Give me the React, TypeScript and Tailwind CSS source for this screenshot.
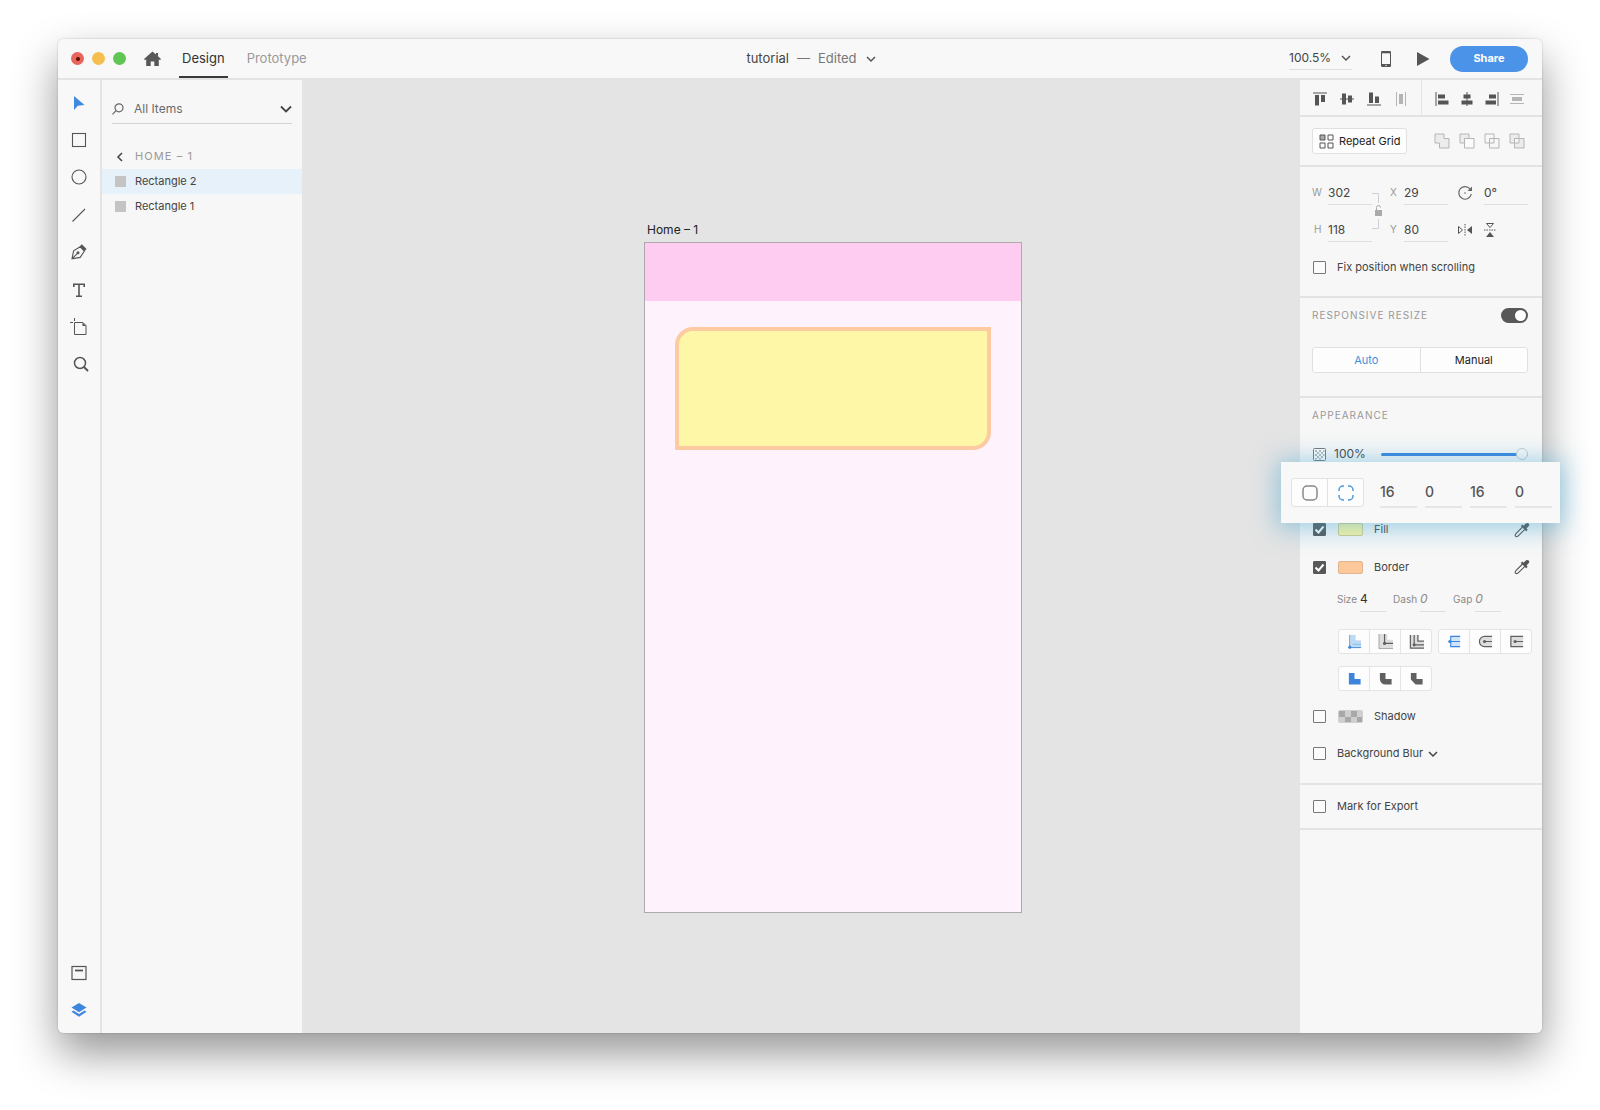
import React, { useState } from 'react';

const Chevron: React.FC<{ className?: string }> = ({ className }) => (
    <svg className={className} width="12" height="12" viewBox="0 0 12 12" fill="none" stroke="currentColor" strokeWidth="1.5">
        <path d="M2 4l4 4 4-4" />
    </svg>
);

const Eyedropper: React.FC = () => (
    <svg width="16" height="16" viewBox="0 0 16 16" fill="none" stroke="#555" strokeWidth="1.1">
        <path d="M8.500 5L2.200 11.300c-1 1-1.300 2.200-.6 2.900s1.900.4 2.900-.6L10.800 7.300" />
        <path d="M6.800 4l1.500-1.500 1.400 1.200 1.800-2c1-1 2.500-1 3.200-.3s.8 2-.3 3.100l-1.900 1.900 1.200 1.400-1.500 1.500z" fill="#555" stroke="none" />
    </svg>
);

const Check: React.FC<{ id: string; checked?: boolean }> = ({ id, checked = false }) => {
    const [on, setOn] = useState(checked);
    return (
        <span className="grid size-[13px] shrink-0">
            <input
                id={id} type="checkbox" checked={on}
                onChange={(e) => setOn(e.target.checked)}
                className="col-start-1 row-start-1 size-[13px] appearance-none rounded-[1px] border border-[#777] bg-[#fbfbfb] checked:border-[#585858] checked:bg-[#585858]"
            />
            {on && (
                <svg className="pointer-events-none col-start-1 row-start-1" width="13" height="13" viewBox="0 0 13 13" fill="none" stroke="#fff" strokeWidth="2">
                    <path d="M2.500 6.500l3 3 5-6" />
                </svg>
            )}
        </span>
    );
};

const Field: React.FC<{ id: string; value: string; label?: string; className?: string }> = ({ id, value, label, className = 'w-11 h-6' }) => (
    <input
        id={id} type="text" defaultValue={value} aria-label={label}
        className={`border-b border-[#dfdfdf] bg-transparent text-[12px] outline-none ${className}`}
    />
);

const tools = [
    { name: 'Select', icon: <path d="M4 2v14l3.800-4.300 6.700-.7z" fill="#3f8ae0" stroke="none" /> },
    { name: 'Rectangle', icon: <rect x="2.500" y="2.500" width="13" height="13" /> },
    { name: 'Ellipse', icon: <circle cx="9" cy="9" r="7" /> },
    { name: 'Line', icon: <path d="M2.500 15.500L15 3" /> },
    {
        name: 'Pen',
        icon: (
            <>
                <path d="M2 15.800l1.600-8 6.600-4 4.200 4.200-4.200 6.400zM2 15.800l5.500-5.500" />
                <circle cx="8" cy="9.700" r="1" fill="#555" />
                <path d="M9.800 3.200l2-2 4.800 4.800-2 2z" fill="#555" stroke="none" />
            </>
        ),
    },
    { name: 'Text', icon: <path d="M3.800 6V3.300h10.400V6M9 3.300v12M6 15.300h6" strokeWidth="1.600" /> },
    { name: 'Artboard', icon: <path d="M4.500 4.500h8.500l3 3v9H4.500zM4.500 0v3M0 4.500h3" strokeWidth="1" /> },
    {
        name: 'Zoom',
        icon: (
            <>
                <circle cx="10" cy="8" r="5.500" strokeWidth="1.500" />
                <path d="M14 12l4 4" strokeWidth="2" />
            </>
        ),
    },
];

const alignVertical = [
    { name: 'Align top', icon: <path d="M1 1.500h14v1H1zM3 4h4v10.500H3zM9 4h4v7H9z" /> },
    { name: 'Align middle', icon: <path d="M1 7.500h14v1H1zM3 2.500h4v11H3zM9 4.500h4v7H9z" /> },
    { name: 'Align bottom', icon: <path d="M1 13.500h14v1H1zM3 1.500h4V12H3zM9 5.500h4V12H9z" /> },
    { name: 'Distribute horizontally', icon: <path d="M3 1h1v14H3zM12 1h1v14h-1zM6 3h4v10H6z" />, dim: true },
];

const alignHorizontal = [
    { name: 'Align left', icon: <path d="M1.500 1h1v14h-1zM4 3.500h7v4H4zM4 9.500h10.500v4H4z" /> },
    { name: 'Align center', icon: <path d="M7.500 1h1v14h-1zM4.500 3.500h7v4h-7zM2.500 9.500h11v4h-11z" /> },
    { name: 'Align right', icon: <path d="M13.500 1h1v14h-1zM5 3.500h7v4H5zM1.500 9.500H12v4H1.500z" /> },
    { name: 'Distribute vertically', icon: <path d="M1 3h14v1H1zM1 12h14v1H1zM3 6h10v4H3z" />, dim: true },
];

const booleans = [
    { name: 'Add', icon: <path d="M1 1h9v4.500h5V15H5.500v-5H1z" fill="#ececec" /> },
    { name: 'Subtract', icon: <><path d="M1 1h9v9H1z" fill="#ececec" /><path d="M5.500 5.500H15V15H5.500z" fill="#fbfbfb" /></> },
    { name: 'Intersect', icon: <path d="M1 1h9v9H1zM5.500 5.500H15V15H5.500z" /> },
    { name: 'Exclude overlap', icon: <path d="M1 1h9v9H1zM5.500 5.500H15V15H5.500z" fill="#ececec" fillRule="evenodd" /> },
];

const strokeAlign = [
    { name: 'Inner stroke', icon: <><path d="M4 1h4v7h7v6H4z" fill="#bcdcf6" stroke="none" /><path d="M3 1v13.500H15" strokeWidth="1" /><path d="M8.500 1v6.500H15M6 11h9" strokeWidth="1" opacity=".4" /><circle cx="3" cy="14" r="1.700" fill="currentColor" stroke="none" /></> },
    { name: 'Center stroke', icon: <><path d="M1 0v15.500h15V6H10V0z" fill="#dedede" stroke="none" /><path d="M1 0v15.500h15" strokeWidth="1" opacity=".5" /><path d="M7 0v10h9" /><circle cx="7" cy="10" r="1.700" fill="currentColor" stroke="none" /></> },
    { name: 'Outer stroke', icon: <><path d="M1 1h9v7h6v7.500H1z" fill="#dedede" stroke="none" /><path d="M1.500 1v14H16M5.500 1v10.500H16M9.500 1v6.500H16" /><circle cx="5.500" cy="11.500" r="1.700" fill="currentColor" stroke="none" /></> },
];

const strokeCap = [
    { name: 'Butt cap', icon: <><path d="M5 2h9v12H5z" fill="#cfe4f8" stroke="none" /><path d="M14 2.500H4v11h10M4 8h10" /><circle cx="3" cy="8" r="1.700" fill="currentColor" stroke="none" /></> },
    { name: 'Round cap', icon: <><path d="M15 2.500H7a5.500 5.500 0 000 11h8z" fill="#dedede" stroke="none" /><path d="M15 2.500H7a5.500 5.500 0 000 11h8M7 8h8" /><circle cx="7" cy="8" r="1.700" fill="currentColor" stroke="none" /></> },
    { name: 'Projecting cap', icon: <><path d="M15 2.500H2v11h13z" fill="#dedede" stroke="none" /><path d="M15 2.500H2v11h13M7 8h8" /><circle cx="6.500" cy="8" r="1.700" fill="currentColor" stroke="none" /></> },
];

const strokeJoin = [
    { name: 'Miter join', icon: <path d="M2 2h6v6.500h6.500v6H2z" fill="currentColor" stroke="none" /> },
    { name: 'Round join', icon: <path d="M2 2h6v6.500h6.500v6H8a6 6 0 01-6-6z" fill="currentColor" stroke="none" /> },
    { name: 'Bevel join', icon: <path d="M2 2h6v6.500h6.500v6H7L2 9z" fill="currentColor" stroke="none" /> },
];

type IconItem = { name: string; icon: React.ReactNode; dim?: boolean };

const Segments: React.FC<{ items: IconItem[] }> = ({ items }) => {
    const [active, setActive] = useState(0);
    return (
        <div className="flex h-[25px] w-[94px] divide-x divide-[#e4e4e4] rounded-[3px] border border-[#e4e4e4] bg-[#fdfdfd]">
            {items.map((item, i) => (
                <button
                    key={item.name} aria-label={item.name} onClick={() => setActive(i)}
                    className={`flex flex-1 items-center justify-center ${active === i ? 'text-[#3f84dc]' : 'text-[#606060]'}`}
                >
                    <svg width="15" height="15" viewBox="0 0 16 16" fill="none" stroke="currentColor" strokeWidth="1.300" overflow="visible">{item.icon}</svg>
                </button>
            ))}
        </div>
    );
};

const AlignGroup: React.FC<{ items: IconItem[] }> = ({ items }) => (
    <>
        {items.map((item) => (
            <button key={item.name} aria-label={item.name}>
                <svg width="16" height="16" viewBox="0 0 16 16" fill={item.dim ? '#b5b5b5' : '#555'}>{item.icon}</svg>
            </button>
        ))}
    </>
);

const Header: React.FC = () => {
    const [tab, setTab] = useState('Design');
    return (
        <header className="flex h-[41px] shrink-0 items-center rounded-t-md border-b-2 border-[#e3e3e3] bg-[#f8f8f8] pl-[13px] pr-3.5">
            <div className="flex h-full flex-1 items-center">
                <div className="flex items-center gap-2">
                    <button aria-label="Close" className="flex size-[13px] items-center justify-center rounded-full bg-[#e7655b]">
                        <span className="size-1 rounded-full bg-[#5e0a05]" />
                    </button>
                    <button aria-label="Minimize" className="size-[13px] rounded-full bg-[#f5bf4f]" />
                    <button aria-label="Maximize" className="size-[13px] rounded-full bg-[#61c554]" />
                </div>
                <button aria-label="Home" className="ml-[17px]">
                    <svg width="19" height="16" viewBox="0 0 19 16" fill="#585858">
                        <path d="M9.500 0.500L1 8l1 1.200 1.200-.9V15h4.500v-4.500h3.600V15h4.500V8.300l1.200.9L18 8l-3-2.700V2h-2v1.600z" />
                    </svg>
                </button>
                <nav className="ml-[17px] flex h-full gap-4">
                    {['Design', 'Prototype'].map((name) => (
                        <button
                            key={name} onClick={() => setTab(name)}
                            className={`border-b-2 px-[3px] pt-0.5 text-[13px] ${tab === name ? 'border-[#3a3a3a] text-[#333]' : 'border-transparent text-[#999]'}`}
                        >
                            {name}
                        </button>
                    ))}
                </nav>
            </div>
            <button className="flex items-center gap-2 pl-6 text-[13px]">
                <span className="text-[#444]">tutorial</span>
                <span className="text-[#777]">—</span>
                <span className="text-[#777]">Edited</span>
                <Chevron className="text-[#555]" />
            </button>
            <div className="flex flex-1 items-center justify-end">
                <div className="grid w-[63px] border-b border-[#e0e0e0]">
                    <select aria-label="Zoom" className="col-start-1 row-start-1 h-[22px] w-full appearance-none bg-transparent text-[12px] text-[#444] outline-none">
                        <option>100.5%</option>
                    </select>
                    <Chevron className="pointer-events-none col-start-1 row-start-1 self-center justify-self-end text-[#555]" />
                </div>
                <button aria-label="Device preview" className="ml-7">
                    <svg width="12" height="18" viewBox="0 0 12 18">
                        <rect x="1" y="1" width="10" height="16" rx="1.200" fill="#555" />
                        <rect x="2" y="3.300" width="8" height="10.700" fill="#f8f8f8" />
                        <circle cx="6" cy="15.500" r=".7" fill="#f8f8f8" />
                    </svg>
                </button>
                <button aria-label="Play" className="ml-6">
                    <svg width="14" height="14" viewBox="0 0 14 14" fill="#555"><path d="M1 0l12.500 7L1 14z" /></svg>
                </button>
                <button className="ml-5 h-[26px] w-[78px] rounded-full bg-[#4b93e9] text-[11px] font-bold text-white">Share</button>
            </div>
        </header>
    );
};

const Toolbar: React.FC = () => (
    <aside className="flex w-11 shrink-0 flex-col justify-between rounded-bl-md border-r-2 border-[#e3e3e3] bg-[#f8f8f8] pb-[5px] pt-1">
        <div className="flex h-[299px] flex-col">
            {tools.map((tool) => (
                <button key={tool.name} aria-label={tool.name} className="flex flex-1 items-center justify-center">
                    <svg width="18" height="18" viewBox="0 0 18 18" fill="none" stroke="#555" strokeWidth="1.100" overflow="visible">
                        {tool.icon}
                        {tool.name === 'Artboard' && <path d="M12.500 4.500l3.500 3.500h-3.500z" fill="#555" stroke="none" />}
                    </svg>
                </button>
            ))}
        </div>
        <div className="flex flex-col">
            <button aria-label="Assets" className="flex h-[37px] items-center justify-center">
                <svg width="18" height="18" viewBox="0 0 18 18" fill="none" stroke="#555" strokeWidth="1.200">
                    <rect x="2" y="2.500" width="14" height="13" />
                    <path d="M5 6.500h8" strokeWidth="1.800" />
                </svg>
            </button>
            <button aria-label="Layers" className="flex h-[37px] items-center justify-center">
                <svg width="18" height="18" viewBox="0 0 18 18" fill="#3f87dc">
                    <path d="M9 2l7.500 4.600L9 11.200 1.500 6.600zM1.500 10.800l2-1.200L9 13l5.500-3.400 2 1.200L9 15.800z" />
                </svg>
            </button>
        </div>
    </aside>
);

const LayersPanel: React.FC = () => {
    const [selected, setSelected] = useState('Rectangle 2');
    return (
        <aside className="w-[200px] shrink-0 bg-[#f7f7f7] pt-3.5 text-[11px]">
            <div className="mx-2.5 flex h-[30px] items-center gap-2.5 border-b border-[#d4d4d4]">
                <svg width="12" height="12" viewBox="0 0 12 12" fill="none" stroke="#666" strokeWidth="1.200">
                    <circle cx="7" cy="4.800" r="4" />
                    <path d="M4 7.700L.5 11.300" />
                </svg>
                <div className="grid flex-1">
                    <select aria-label="Filter layers" className="col-start-1 row-start-1 w-full appearance-none bg-transparent text-[12px] text-[#6a6a6a] outline-none">
                        <option>All Items</option>
                    </select>
                    <svg className="pointer-events-none col-start-1 row-start-1 self-center justify-self-end" width="12" height="12" viewBox="0 0 12 12" fill="none" stroke="#444" strokeWidth="1.800">
                        <path d="M1 3.500l5 5 5-5" />
                    </svg>
                </div>
            </div>
            <button className="mt-5 flex h-[25px] w-full items-center pl-3.5 tracking-widest text-[#999]">
                <svg className="mr-[11px]" width="8" height="10" viewBox="0 0 8 10" fill="none" stroke="#444" strokeWidth="1.500"><path d="M6 1L2 5l4 4" /></svg>
                HOME – 1
            </button>
            <ul>
                {['Rectangle 2', 'Rectangle 1'].map((name) => (
                    <li key={name}>
                        <button
                            onClick={() => setSelected(name)}
                            className={`flex h-[25px] w-full items-center gap-[9px] pl-[13px] text-[#444] ${selected === name ? 'bg-[#e6f1fa]' : ''}`}
                        >
                            <span className="size-[11px] bg-[#c4c4c4]" />
                            {name}
                        </button>
                    </li>
                ))}
            </ul>
        </aside>
    );
};

const Canvas: React.FC = () => (
    <main className="relative min-w-0 flex-1 overflow-hidden bg-[#e4e4e4]">
        <div className="absolute left-[342px] top-[142px] w-[378px]">
            <p className="h-5 pl-[3px] text-[12px] leading-4 text-[#222]">Home – 1</p>
            <div className="h-[671px] border border-[#ababab] bg-[#fef2fd]">
                <div className="h-[58px] bg-[#fecbf1]" />
                <div className="mx-[30px] mt-[26px] h-[123px] rounded-br-[18px] rounded-tl-[18px] border-4 border-[#fdcba2] bg-[#fff7a8]" />
            </div>
        </div>
    </main>
);

// Floats over the panel, wider than the row that it belongs to
const CornerRadius: React.FC = () => {
    const [each, setEach] = useState(true);
    return (
        <div className="absolute -left-[31px] -top-3 z-10 flex h-[61px] w-[279px] items-center bg-[#f8f8f8] pl-2.5 shadow-[0_2px_24px_4px_rgba(70,165,210,0.5)]">
            <div className="flex h-[29px] w-[73px] divide-x divide-[#e2e2e2] rounded-[3px] border border-[#e2e2e2] bg-[#fdfdfd]">
                <button aria-label="Same radius for all corners" onClick={() => setEach(false)} className={`flex flex-1 items-center justify-center ${each ? 'text-[#888]' : 'text-[#4a9be0]'}`}>
                    <svg width="16" height="16" viewBox="0 0 16 16" fill="none" stroke="currentColor" strokeWidth="1.500"><rect x="1" y="1" width="14" height="14" rx="4" /></svg>
                </button>
                <button aria-label="Different radius for each corner" onClick={() => setEach(true)} className={`flex flex-1 items-center justify-center ${each ? 'text-[#4a9be0]' : 'text-[#888]'}`}>
                    <svg width="16" height="16" viewBox="0 0 16 16" fill="none" stroke="currentColor" strokeWidth="1.500">
                        <path d="M1 6V5a4 4 0 014-4h1M10 1h1a4 4 0 014 4v1M15 10v1a4 4 0 01-4 4h-1M6 15H5a4 4 0 01-4-4v-1" />
                    </svg>
                </button>
            </div>
            <div className="ml-4 flex gap-2">
                {['16', '0', '16', '0'].map((value, i) => (
                    <input
                        key={i} type="text" defaultValue={value} aria-label={`Corner ${i + 1}`}
                        className="h-[30px] w-[37px] border-b-2 border-[#e6e6e6] bg-transparent text-[14px] font-medium text-[#555] outline-none"
                    />
                ))}
            </div>
        </div>
    );
};

const Inspector: React.FC = () => {
    const [resize, setResize] = useState('Auto');
    const [responsive, setResponsive] = useState(true);
    const [opacity, setOpacity] = useState(100);

    return (
        <aside className="w-[242px] shrink-0 rounded-br-md bg-[#f7f7f7] text-[11px] text-[#444]">
            <div className="flex h-[37px] items-stretch border-b-2 border-[#e3e3e3]">
                <div className="flex w-[122px] items-center justify-between border-r border-[#e3e3e3] px-3 pt-0.5"><AlignGroup items={alignVertical} /></div>
                <div className="flex flex-1 items-center justify-between pl-3 pr-[17px] pt-0.5"><AlignGroup items={alignHorizontal} /></div>
            </div>

            <div className="flex h-[50px] items-center justify-between border-b-2 border-[#e3e3e3] pl-3 pr-[17px]">
                <button className="flex h-[26px] items-center gap-[5px] rounded-[3px] border border-[#e0e0e0] bg-[#fdfdfd] px-1.5 text-[#222]">
                    <svg width="15" height="15" viewBox="0 0 15 15" fill="none" stroke="#555">
                        <path d="M1 1h5v5H1z" fill="#aaa" />
                        <path d="M9 1h5v5H9zM1 9h5v5H1zM9 9h5v5H9z" />
                    </svg>
                    Repeat Grid
                </button>
                <div className="flex gap-[9px]">
                    {booleans.map((item) => (
                        <button key={item.name} aria-label={item.name}>
                            <svg width="16" height="16" viewBox="0 0 16 16" fill="none" stroke="#b5b5b5">{item.icon}</svg>
                        </button>
                    ))}
                </div>
            </div>

            <section className="border-b-2 border-[#e3e3e3] px-3 pb-2.5 pt-[7px]">
                <div className="grid grid-cols-[16px_44px_16px_16px_44px_34px_46px] grid-rows-[37px_37px] items-center">
                    <label htmlFor="w" className="text-[10px] text-[#999]">W</label>
                    <Field id="w" value="302" />
                    <svg className="row-span-2" width="16" height="44" viewBox="0 0 16 44" fill="none" stroke="#d0d0d0">
                        <path d="M0 4.500h6.500V14M6.500 30v9.500H0" />
                        <path d="M3 21h7v6H3z" fill="#aaa" stroke="none" />
                        <path d="M4.500 21v-2.500a2 2 0 014 0" stroke="#aaa" />
                    </svg>
                    <label htmlFor="x" className="pl-0.5 text-[10px] text-[#999]">X</label>
                    <Field id="x" value="29" />
                    <button aria-label="Rotate" className="justify-self-center">
                        <svg width="16" height="16" viewBox="0 0 16 16" fill="none" stroke="#666" strokeWidth="1.200">
                            <path d="M13.400 4.500A6.300 6.300 0 1014.300 9" />
                            <path d="M15 1.500v4.500h-4.500z" fill="#666" stroke="none" />
                            <circle cx="8" cy="8" r=".8" fill="#666" stroke="none" />
                        </svg>
                    </button>
                    <Field id="rotation" value="0°" label="Rotation" className="ml-0.5 h-6 w-11" />
                    <label htmlFor="h" className="pl-0.5 text-[10px] text-[#999]">H</label>
                    <Field id="h" value="118" />
                    <label htmlFor="y" className="pl-0.5 text-[10px] text-[#999]">Y</label>
                    <Field id="y" value="80" />
                    <button aria-label="Flip horizontally" className="justify-self-center">
                        <svg width="16" height="16" viewBox="0 0 16 16" fill="none" stroke="#555">
                            <path d="M1.500 4.500L5.500 8l-4 3.500z" />
                            <path d="M8 2v12" strokeDasharray="1.500 1" />
                            <path d="M15 4v8l-5-4z" fill="#555" stroke="none" />
                        </svg>
                    </button>
                    <button aria-label="Flip vertically" className="w-4">
                        <svg width="16" height="16" viewBox="0 0 16 16" fill="none" stroke="#555">
                            <path d="M4.500 1.500L8 5.500l3.500-4z" />
                            <path d="M2 8h12" strokeDasharray="1.500 1" />
                            <path d="M4 15h8l-4-5z" fill="#555" stroke="none" />
                        </svg>
                    </button>
                </div>
                <div className="flex h-[38px] items-center gap-[11px] pl-px">
                    <Check id="fix" />
                    <label htmlFor="fix">Fix position when scrolling</label>
                </div>
            </section>

            <section className="border-b-2 border-[#e3e3e3] pb-[23px] pl-3 pr-3.5">
                <div className="flex h-[35px] items-center justify-between">
                    <h2 className="text-[10px] tracking-widest text-[#999]">RESPONSIVE RESIZE</h2>
                    <button
                        role="switch" aria-checked={responsive} aria-label="Responsive resize" onClick={() => setResponsive(!responsive)}
                        className={`flex h-[15px] w-[27px] items-center rounded-full bg-[#585858] px-0.5 ${responsive ? 'justify-end' : 'justify-start'}`}
                    >
                        <span className="size-[11px] rounded-full bg-white" />
                    </button>
                </div>
                <div className="mt-3.5 flex h-[26px] divide-x divide-[#e0e0e0] rounded-[3px] border border-[#e0e0e0] bg-[#fdfdfd]">
                    {['Auto', 'Manual'].map((name) => (
                        <button key={name} onClick={() => setResize(name)} className={`flex-1 ${resize === name ? 'text-[#3f90e0]' : 'text-[#222]'}`}>{name}</button>
                    ))}
                </div>
            </section>

            <section className="border-b-2 border-[#e3e3e3] px-3 pb-[11px]">
                <h2 className="flex h-[35px] items-center text-[10px] tracking-widest text-[#999]">APPEARANCE</h2>
                <div className="mt-0.5 flex h-[38px] items-center pl-px pr-0.5">
                    <svg width="13" height="13" viewBox="0 0 13 13">
                        <rect x=".5" y=".5" width="12" height="12" rx="1" fill="#fff" stroke="#777" />
                        <path d="M2 2h2v2H2zM6 2h2v2H6zM4 4h2v2H4zM8 4h2v2H8zM2 6h2v2H2zM6 6h2v2H6zM4 8h2v2H4zM8 8h2v2H8zM10 2h1.500v2H10zM10 6h1.500v2H10zM2 10h2v1.500H2zM6 10h2v1.500H6z" fill="#bbb" />
                    </svg>
                    <label htmlFor="opacity" className="ml-2 w-[47px] text-[12px]">{opacity}%</label>
                    <input
                        id="opacity" type="range" min="0" max="100" value={opacity} onChange={(e) => setOpacity(Number(e.target.value))}
                        className="h-[3px] min-w-0 flex-1 appearance-none rounded-full bg-[#3a85de] [&::-webkit-slider-thumb]:size-3 [&::-webkit-slider-thumb]:appearance-none [&::-webkit-slider-thumb]:rounded-full [&::-webkit-slider-thumb]:border [&::-webkit-slider-thumb]:border-[#c2ccd2] [&::-webkit-slider-thumb]:bg-[#fafafa]"
                    />
                </div>
                <div className="relative mt-px h-[37px]">
                    <CornerRadius />
                </div>
                <div className="flex h-[37px] items-center pl-px">
                    <Check id="fill" checked />
                    <button aria-label="Fill color" className="ml-3 h-[13px] w-[25px] rounded-[2px] border border-[#cfcf90] bg-[#fff7a6]" />
                    <label htmlFor="fill" className="ml-[11px] flex-1">Fill</label>
                    <button aria-label="Pick fill color"><Eyedropper /></button>
                </div>
                <div className="flex h-[38px] items-center pl-px">
                    <Check id="border" checked />
                    <button aria-label="Border color" className="ml-3 h-[13px] w-[25px] rounded-[2px] border border-[#e0b48e] bg-[#fdc99a]" />
                    <label htmlFor="border" className="ml-[11px] flex-1">Border</label>
                    <button aria-label="Pick border color"><Eyedropper /></button>
                </div>
                <div className="flex h-[26px] items-center gap-[3px] pl-[25px] text-[10px] text-[#8a8a8a]">
                    <label htmlFor="size">Size</label>
                    <Field id="size" value="4" className="h-[25px] w-[26px] text-[#333]" />
                    <label htmlFor="dash" className="ml-1">Dash</label>
                    <Field id="dash" value="0" className="h-[25px] w-[26px] italic" />
                    <label htmlFor="gap" className="ml-1">Gap</label>
                    <Field id="gap" value="0" className="h-[25px] w-[26px] italic" />
                </div>
                <div className="-mr-1 mt-[17px] flex flex-wrap gap-x-1.5 gap-y-3 pl-[26px]">
                    <Segments items={strokeAlign} />
                    <Segments items={strokeCap} />
                    <Segments items={strokeJoin} />
                </div>
                <div className="mt-[7px] flex h-[37px] items-center pl-px">
                    <Check id="shadow" />
                    <button aria-label="Shadow color" className="ml-3">
                        <svg width="25" height="13" viewBox="0 0 25 13">
                            <rect width="25" height="13" rx="2" fill="#cfcfcf" />
                            <path d="M1 1h6v6H1zM13 1h6v6h-6zM7 7h6v5H7zM19 7h5v5h-5z" fill="#a8a8a8" />
                        </svg>
                    </button>
                    <label htmlFor="shadow" className="ml-[11px]">Shadow</label>
                </div>
                <div className="flex h-[37px] items-center pl-px">
                    <Check id="blur" />
                    <label htmlFor="blur" className="ml-[11px]">Background Blur</label>
                    <button aria-label="Blur options" className="ml-1"><Chevron /></button>
                </div>
            </section>

            <div className="flex h-[45px] items-center gap-[11px] border-b-2 border-[#e3e3e3] pl-[13px]">
                <Check id="export" />
                <label htmlFor="export">Mark for Export</label>
            </div>
        </aside>
    );
};

const App: React.FC = () => (
    <div className="flex h-screen min-h-[960px] bg-white px-[58px] pb-[77px] pt-[39px] font-['Inter',sans-serif]">
        <div className="flex min-w-0 flex-1 flex-col rounded-md shadow-[0_20px_44px_rgba(0,0,0,0.42),0_0_2px_rgba(0,0,0,0.25)]">
            <Header />
            <div className="flex min-h-0 flex-1">
                <Toolbar />
                <LayersPanel />
                <Canvas />
                <Inspector />
            </div>
        </div>
    </div>
);

export default App;
